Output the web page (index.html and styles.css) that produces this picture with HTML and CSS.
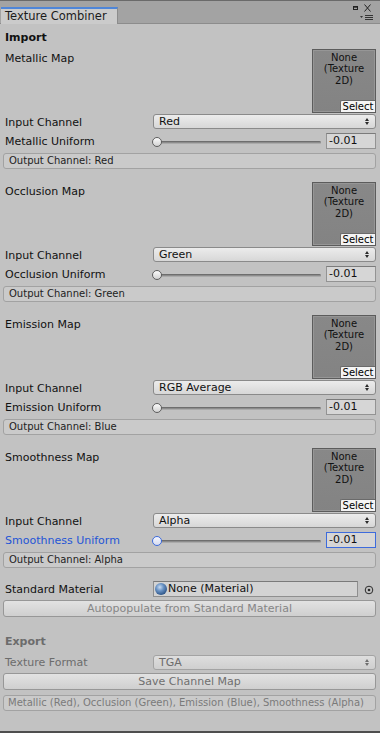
FILE: index.html
```html
<!DOCTYPE html>
<html lang="en">
<head>
    <meta charset="UTF-8">
    <meta name="viewport" content="width=device-width, initial-scale=1.0">
    <title>Texture Combiner</title>
    <link rel="stylesheet" href="styles.css">
</head>
<body>
    <div class="window">
        <div class="tabbar">
            <div class="tab">Texture Combiner</div>
            <div class="win-icons">
                <svg class="win-btns" width="24" height="20" viewBox="0 0 24 20">
                    <rect x="1.5" y="5.5" width="4" height="3" fill="none" stroke="#222" stroke-width="1"/>
                    <rect x="1.5" y="5.5" width="4" height="1.2" fill="#222"/>
                    <path d="M12.5 3.5 L18.5 10.5 M18.5 3.5 L12.5 10.5" stroke="#222" stroke-width="1"/>
                    <path d="M8 15 L11 15 L9.5 17 Z" fill="#333"/>
                    <path d="M13 14.5 H21 M13 16.5 H21 M13 18.5 H21" stroke="#333" stroke-width="1"/>
                </svg>
            </div>
        </div>

        <main class="content">
            <div class="heading">Import</div>

            <section class="channel">
                <div class="map-row">
                    <span class="label">Metallic Map</span>
                    <div class="tex-slot">
                        <span class="tex-name">None<br>(Texture<br>2D)</span>
                        <span class="tex-select">Select</span>
                    </div>
                </div>
                <div class="row">
                    <span class="label">Input Channel</span>
                    <div class="popup">Red<span class="arrows"></span></div>
                </div>
                <div class="row">
                    <span class="label">Metallic Uniform</span>
                    <div class="slider">
                        <div class="track"><span class="thumb"></span></div>
                        <div class="num">-0.01</div>
                    </div>
                </div>
                <div class="helpbox">Output Channel: Red</div>
            </section>

            <section class="channel">
                <div class="map-row">
                    <span class="label">Occlusion Map</span>
                    <div class="tex-slot">
                        <span class="tex-name">None<br>(Texture<br>2D)</span>
                        <span class="tex-select">Select</span>
                    </div>
                </div>
                <div class="row">
                    <span class="label">Input Channel</span>
                    <div class="popup">Green<span class="arrows"></span></div>
                </div>
                <div class="row">
                    <span class="label">Occlusion Uniform</span>
                    <div class="slider">
                        <div class="track"><span class="thumb"></span></div>
                        <div class="num">-0.01</div>
                    </div>
                </div>
                <div class="helpbox">Output Channel: Green</div>
            </section>

            <section class="channel">
                <div class="map-row">
                    <span class="label">Emission Map</span>
                    <div class="tex-slot">
                        <span class="tex-name">None<br>(Texture<br>2D)</span>
                        <span class="tex-select">Select</span>
                    </div>
                </div>
                <div class="row">
                    <span class="label">Input Channel</span>
                    <div class="popup">RGB Average<span class="arrows"></span></div>
                </div>
                <div class="row">
                    <span class="label">Emission Uniform</span>
                    <div class="slider">
                        <div class="track"><span class="thumb"></span></div>
                        <div class="num">-0.01</div>
                    </div>
                </div>
                <div class="helpbox">Output Channel: Blue</div>
            </section>

            <section class="channel">
                <div class="map-row">
                    <span class="label">Smoothness Map</span>
                    <div class="tex-slot">
                        <span class="tex-name">None<br>(Texture<br>2D)</span>
                        <span class="tex-select">Select</span>
                    </div>
                </div>
                <div class="row">
                    <span class="label">Input Channel</span>
                    <div class="popup">Alpha<span class="arrows"></span></div>
                </div>
                <div class="row focused">
                    <span class="label">Smoothness Uniform</span>
                    <div class="slider">
                        <div class="track"><span class="thumb"></span></div>
                        <div class="num">-0.01</div>
                    </div>
                </div>
                <div class="helpbox">Output Channel: Alpha</div>
            </section>

            <div class="row material-row">
                <span class="label">Standard Material</span>
                <div class="object-field">
                    <div class="obj">
                        <span class="sphere"></span>None (Material)
                    </div>
                    <svg class="picker" width="10" height="10" viewBox="0 0 10 10">
                        <circle cx="5" cy="5" r="3.8" fill="none" stroke="#2a2a2a" stroke-width="1"/>
                        <circle cx="5" cy="5" r="1.3" fill="#2a2a2a"/>
                    </svg>
                </div>
            </div>
            <button class="btn" disabled>Autopopulate from Standard Material</button>

            <div class="export">
                <div class="heading">Export</div>
                <div class="row">
                    <span class="label">Texture Format</span>
                    <div class="popup">TGA<span class="arrows"></span></div>
                </div>
                <button class="btn" disabled>Save Channel Map</button>
                <div class="helpbox">Metallic (Red), Occlusion (Green), Emission (Blue), Smoothness (Alpha)</div>
            </div>
        </main>
    </div>
</body>
</html>
```

FILE: styles.css
```css
* {
    box-sizing: border-box;
}

body {
    margin: 0;
    padding: 0;
    font-family: 'DejaVu Sans', Verdana, sans-serif;
    font-size: 11px;
    color: #111;
    background: #c2c2c2;
}

.window {
    width: 380px;
    height: 733px;
    display: flex;
    flex-direction: column;
    background: #c2c2c2;
    border-bottom: 2px solid #4e4e4e;
}

/* tab strip */
.tabbar {
    height: 24px;
    display: flex;
    align-items: flex-end;
    justify-content: space-between;
    background: #a3a3a3;
    border-top: 1px solid #6a6a6a;
    border-bottom: 1px solid #8c8c8c;
}

.tab {
    height: 17px;
    margin-bottom: -1px;
    margin-left: 1px;
    padding: 0 10px 0 4px;
    line-height: 15px;
    background: #cbcbcb;
    border-top: 2px solid #4f86d8;
    border-right: 1px solid #8c8c8c;
    color: #1b1b1b;
    font-size: 11.5px;
}

.win-icons {
    align-self: flex-start;
    margin-right: 4px;
    height: 20px;
}

.win-btns {
    display: block;
}

/* content */
.content {
    flex: 1;
    padding: 6px 4px 0 3px;
}

.heading {
    height: 16px;
    line-height: 16px;
    padding-left: 2px;
    font-weight: bold;
    margin-bottom: 3px;
}

.label {
    padding-left: 2px;
    line-height: 17px;
    white-space: nowrap;
}

.channel {
    margin-bottom: 13px;
}

.map-row {
    height: 64px;
    display: flex;
    justify-content: space-between;
    align-items: flex-start;
}

.map-row .label {
    margin-top: 1px;
}

.tex-slot {
    position: relative;
    width: 64px;
    height: 64px;
    border: 1px solid #5c5c5c;
    background: linear-gradient(#888888, #838383);
    box-shadow: inset 0 0 0 1px #969696;
    text-align: center;
    color: #111;
}

.tex-name {
    display: block;
    padding-top: 2px;
    font-size: 10px;
    line-height: 11.3px;
}

.tex-select {
    position: absolute;
    right: 0;
    bottom: 0;
    width: 35px;
    height: 12px;
    line-height: 12px;
    font-size: 10px;
    background: #f4f4f4;
    border-top: 1px solid #6a6a6a;
    border-left: 1px solid #6a6a6a;
    border-top-left-radius: 2px;
    color: #000;
}

.row {
    display: grid;
    grid-template-columns: 150px 1fr;
    height: 16px;
    align-items: start;
}

.channel .row:nth-child(2) {
    margin-top: 1px;
}

.channel .row:nth-child(3) {
    margin-top: 3px;
}

.popup {
    position: relative;
    height: 15px;
    line-height: 13px;
    padding-left: 5px;
    border: 1px solid #8a8a8a;
    border-radius: 3px;
    background: linear-gradient(#ececec, #d7d7d7);
    font-size: 11px;
}

.arrows {
    position: absolute;
    right: 5px;
    top: 3px;
    width: 5px;
    height: 7px;
}

.arrows::before,
.arrows::after {
    content: "";
    position: absolute;
    left: 0;
    border-left: 2.5px solid transparent;
    border-right: 2.5px solid transparent;
}

.arrows::before {
    top: 0;
    border-bottom: 3px solid #2a2a2a;
}

.arrows::after {
    bottom: 0;
    border-top: 3px solid #2a2a2a;
}

.slider {
    display: flex;
    align-items: flex-start;
    gap: 5px;
}

.track {
    position: relative;
    flex: 1;
    height: 3px;
    margin-top: 7.5px;
    background: #8c8c8c;
    border-top: 1px solid #6e6e6e;
    border-bottom: 1px solid #ababab;
    border-radius: 2px;
}

.thumb {
    position: absolute;
    left: -1px;
    top: -4.5px;
    width: 10px;
    height: 10px;
    border-radius: 50%;
    border: 1px solid #5f5f5f;
    background: linear-gradient(#fbfbfb, #d2d2d2);
}

.num {
    width: 50px;
    height: 16px;
    line-height: 14px;
    padding-left: 2px;
    font-size: 11px;
    border: 1px solid #939393;
    border-top-color: #7b7b7b;
    background: #d6d6d6;
}

.focused .label {
    color: #1f55d6;
}

.focused .thumb {
    border-color: #3d6bdc;
    background: linear-gradient(#f4f6ff, #d6dbee);
}

.focused .num {
    border-color: #3d6bdc;
}

.helpbox {
    height: 16px;
    margin-top: 4px;
    line-height: 14px;
    padding-left: 5px;
    font-size: 10px;
    color: #222;
    border: 1px solid #a2a2a2;
    border-radius: 3px;
    background: #cacaca;
    white-space: nowrap;
    overflow: hidden;
}

.material-row {
    height: 16px;
}

.object-field {
    display: flex;
    align-items: center;
    justify-content: space-between;
}

.obj {
    width: 205px;
    height: 16px;
    display: flex;
    align-items: center;
    padding-left: 1px;
    line-height: 14px;
    border: 1px solid #8f8f8f;
    border-top-color: #7a7a7a;
    background: #d3d3d3;
}

.sphere {
    width: 12px;
    height: 12px;
    margin-right: 1px;
    border-radius: 50%;
    background: radial-gradient(circle at 40% 35%, #c9dcf2 0, #6a93c4 35%, #2d5487 75%, #1b3558 100%);
}

.picker {
    margin-right: 2px;
    margin-top: 1px;
}

.btn {
    display: block;
    width: 100%;
    height: 17px;
    margin-top: 3px;
    padding: 0;
    font-family: 'DejaVu Sans', Verdana, sans-serif;
    font-size: 11px;
    line-height: 15px;
    color: #868686;
    border: 1px solid #979797;
    border-radius: 3px;
    background: linear-gradient(#e2e2e2, #cfcfcf);
}

.export {
    margin-top: 17px;
}

.export .heading {
    color: #6c6c6c;
    margin-bottom: 4px;
}

.export .label {
    color: #6c6c6c;
}

.export .row {
    height: 15px;
    align-items: center;
}

.export .popup {
    color: #6c6c6c;
    border-color: #a3a3a3;
    background: linear-gradient(#dedede, #cfcfcf);
}

.export .popup .arrows {
    opacity: 0.6;
}

.export .btn {
    color: #6f6f6f;
    margin-top: 4px;
}

.export .helpbox {
    margin-top: 5px;
    color: #7a7a7a;
    padding-left: 4px;
}
```
